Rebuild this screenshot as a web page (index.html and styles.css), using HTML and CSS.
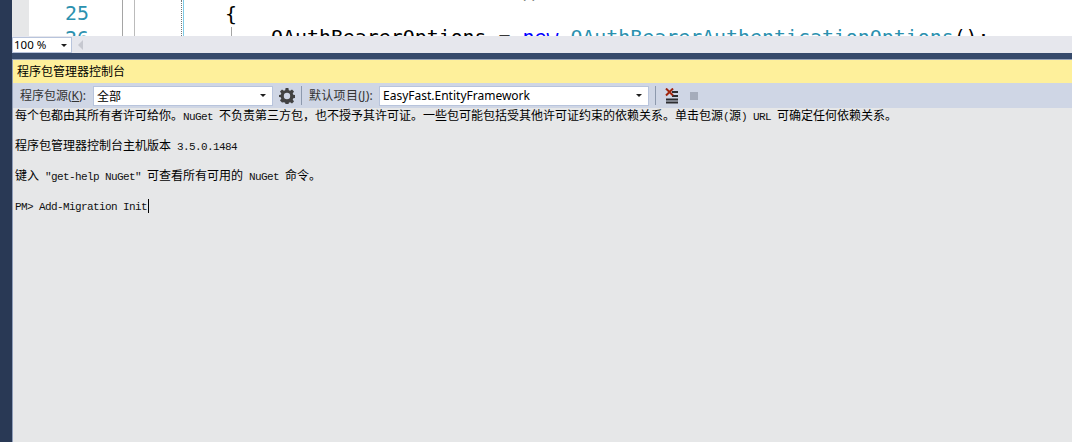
FILE: index.html
```html
<!DOCTYPE html>
<html lang="zh">
<head>
<meta charset="utf-8">
<title>程序包管理器控制台</title>
<link rel="stylesheet" href="styles.css">
</head>
<body>
<div class="shell">
  <section class="editor">
    <div class="gutter"></div>
    <div class="lines">
      <div class="ln">25</div>
      <div class="ln">26</div>
    </div>
    <div class="margin-a"></div>
    <div class="margin-b"></div>
    <div class="code">
      <div class="cl cl-top">()</div>
      <div class="cl cl-brace">{</div>
      <div class="cl cl-stmt">OAuthBearerOptions = <span class="kw">new</span> <span class="ty">OAuthBearerAuthenticationOptions</span>();</div>
      <span class="guide"></span>
    </div>
  </section>
  <div class="zoombar">
    <div class="zoomcombo"><span>100 %</span><i class="arrow"></i></div>
    <i class="scroll-left"></i>
  </div>
  <div class="band"></div>
  <section class="panel">
    <header class="title">程序包管理器控制台</header>
    <div class="toolbar">
      <label class="lbl lbl-src">程序包源(<u>K</u>):</label>
      <div class="combo combo-src"><span>全部</span><i class="arrow"></i></div>
      <svg class="gear" width="16" height="16" viewBox="0 0 16 16"><path fill="#424242" fill-rule="evenodd" d="M6.600 0h2.800l.4 2.200 1.300.6L13 1.500l2 2-1.300 1.900.6 1.300 2.200.4v2.800l-2.200.4-.6 1.300 1.300 1.900-2 2-1.900-1.300-1.300.6-.4 2.200H6.600l-.4-2.200-1.300-.6L3 14.500l-2-2 1.300-1.900-.6-1.300L0 8.900V7.100l1.700-.4.6-1.300L1 3.500l2-2 1.900 1.300 1.300-.6zM8 4.800a3.200 3.200 0 1 0 0 6.400 3.200 3.200 0 0 0 0-6.400z"/></svg>
      <span class="sep sep-a"></span>
      <label class="lbl lbl-proj">默认项目(<u>J</u>):</label>
      <div class="combo combo-proj"><span>EasyFast.EntityFramework</span><i class="arrow"></i></div>
      <span class="sep sep-b"></span>
      <svg class="clear" width="14" height="16" viewBox="0 0 14 16"><path fill="#2d2d30" d="M7 3h6v2H7zM7 7h6v2H7zM1 10.500h12v2H1zM1 13.500h12v2H1z"/><path stroke="#a1260d" stroke-width="2" d="M1 .5l7 7M8 .5l-7 7"/></svg>
      <span class="stop"></span>
    </div>
    <div class="console">
      <p class="row">每个包都由其所有者许可给你。<span class="en">NuGet </span>不负责第三方包，也不授予其许可证。一些包可能包括受其他许可证约束的依赖关系。单击包源<span class="en">(</span>源<span class="en">) URL </span>可确定任何依赖关系。</p>
      <p class="row">程序包管理器控制台主机版本<span class="en"> 3.5.0.1484</span></p>
      <p class="row">键入<span class="en"> "get-help NuGet" </span>可查看所有可用的<span class="en"> NuGet </span>命令。</p>
      <p class="row"><span class="en">PM&gt; Add-Migration Init</span><span class="caret"></span></p>
    </div>
  </section>
</div>
</body>
</html>
```
FILE: styles.css
```css
* { box-sizing: border-box; }
html, body { margin: 0; padding: 0; height: 100%; overflow: hidden; }
body { font-family: "Noto Sans", "Noto Sans CJK SC", sans-serif; background: #293955; }
.shell { height: 442px; width: 1072px; padding-left: 12px; display: flex; flex-direction: column; background: #293955; }

.editor { height: 36px; flex: none; display: flex; background: #fff; overflow: hidden; font-family: "DejaVu Sans Mono", monospace; font-size: 19.9px; }
.gutter { width: 17px; background: #e6e7e8; flex: none; }
.lines { width: 93px; flex: none; padding-right: 33px; text-align: right; color: #2b91af; margin-top: 1px; }
.ln { height: 25px; line-height: 25px; }
.margin-a { width: 12px; flex: none; border-left: 1px solid #a5a5a5; }
.margin-b { width: 48px; flex: none; border-left: 1px solid #bbb; border-right: 1px dotted #777; }
.code { flex: 1; position: relative; border-left: 1px solid #7fcbe6; margin-left: 1px; color: #000; margin-top: -21px; }
.cl { height: 25px; line-height: 25px; white-space: pre; }
.cl-top { padding-left: 333px; height: 22px; }
.cl-brace { padding-left: 41px; margin-top: 1px; }
.cl-stmt { padding-left: 87px; margin-top: -2px; }
.kw { color: #0000ff; }
.ty { color: #2b91af; }
.guide { position: absolute; left: 47px; top: 48px; height: 10px; width: 1px; background: #a5a5a5; }

.zoombar { height: 17px; flex: none; background: #e6e7ed; display: flex; align-items: flex-start; padding-top: 1px; }
.zoomcombo { width: 60px; height: 16px; background: #fff; border: 1px solid #b8c4dc; display: flex; align-items: center; justify-content: space-between; padding: 0 4px 0 1px; font-size: 11.5px; color: #000; line-height: 14px; }
.scroll-left { margin: 3px 0 0 6px; width: 0; height: 0; border-style: solid; border-width: 5px 5px 5px 0; border-color: transparent #c6c8d0 transparent transparent; }
.arrow { width: 0; height: 0; border-style: solid; border-width: 3px 3px 0 3px; border-color: #1e1e1e transparent transparent transparent; flex: none; }

.band { height: 6px; flex: none; background: #364a6b; }
.panel { flex: 1; display: flex; flex-direction: column; border-left: 1px solid #8f9db8; border-top: 1px solid #9aa5ba; min-height: 0; }
.title { height: 23px; flex: none; background: #fef09b; color: #000; font-size: 12px; line-height: 23px; padding-left: 4px; }

.toolbar { height: 25px; flex: none; background: #cfd6e5; display: flex; align-items: center; font-size: 12px; color: #333; }
.lbl { white-space: nowrap; line-height: 16px; }
.lbl-src { margin-left: 7px; width: 73px; }
.lbl-proj { width: 70px; letter-spacing: .3px; }
.combo { height: 20px; background: #fff; border: 1px solid #b8c4dc; display: flex; align-items: center; justify-content: space-between; padding: 0 6px 0 3px; color: #000; font-size: 12px; }
.combo-src { width: 180px; }
.combo-proj { width: 270px; }
.gear { margin-left: 6px; flex: none; }
.sep { width: 1px; height: 19px; background: #8d99ad; flex: none; }
.sep-a { margin: 0 7px 0 6px; }
.sep-b { margin: 0 9px 0 6px; }
.clear { flex: none; }
.stop { width: 8px; height: 8px; background: #a5acbb; margin-left: 11px; flex: none; }

.console { flex: 1; background: #e6e7e8; color: #000; font-family: "Noto Sans CJK SC", sans-serif; font-size: 12px; }
.row { margin: 0 0 0 2px; height: 30px; line-height: 13px; white-space: pre; }
.en { font-family: "Liberation Mono", monospace; font-size: 11px; letter-spacing: -0.6px; color: #111; }
.caret { display: inline-block; width: 1px; height: 14px; background: #000; vertical-align: -3px; margin-left: 1px; }
```
